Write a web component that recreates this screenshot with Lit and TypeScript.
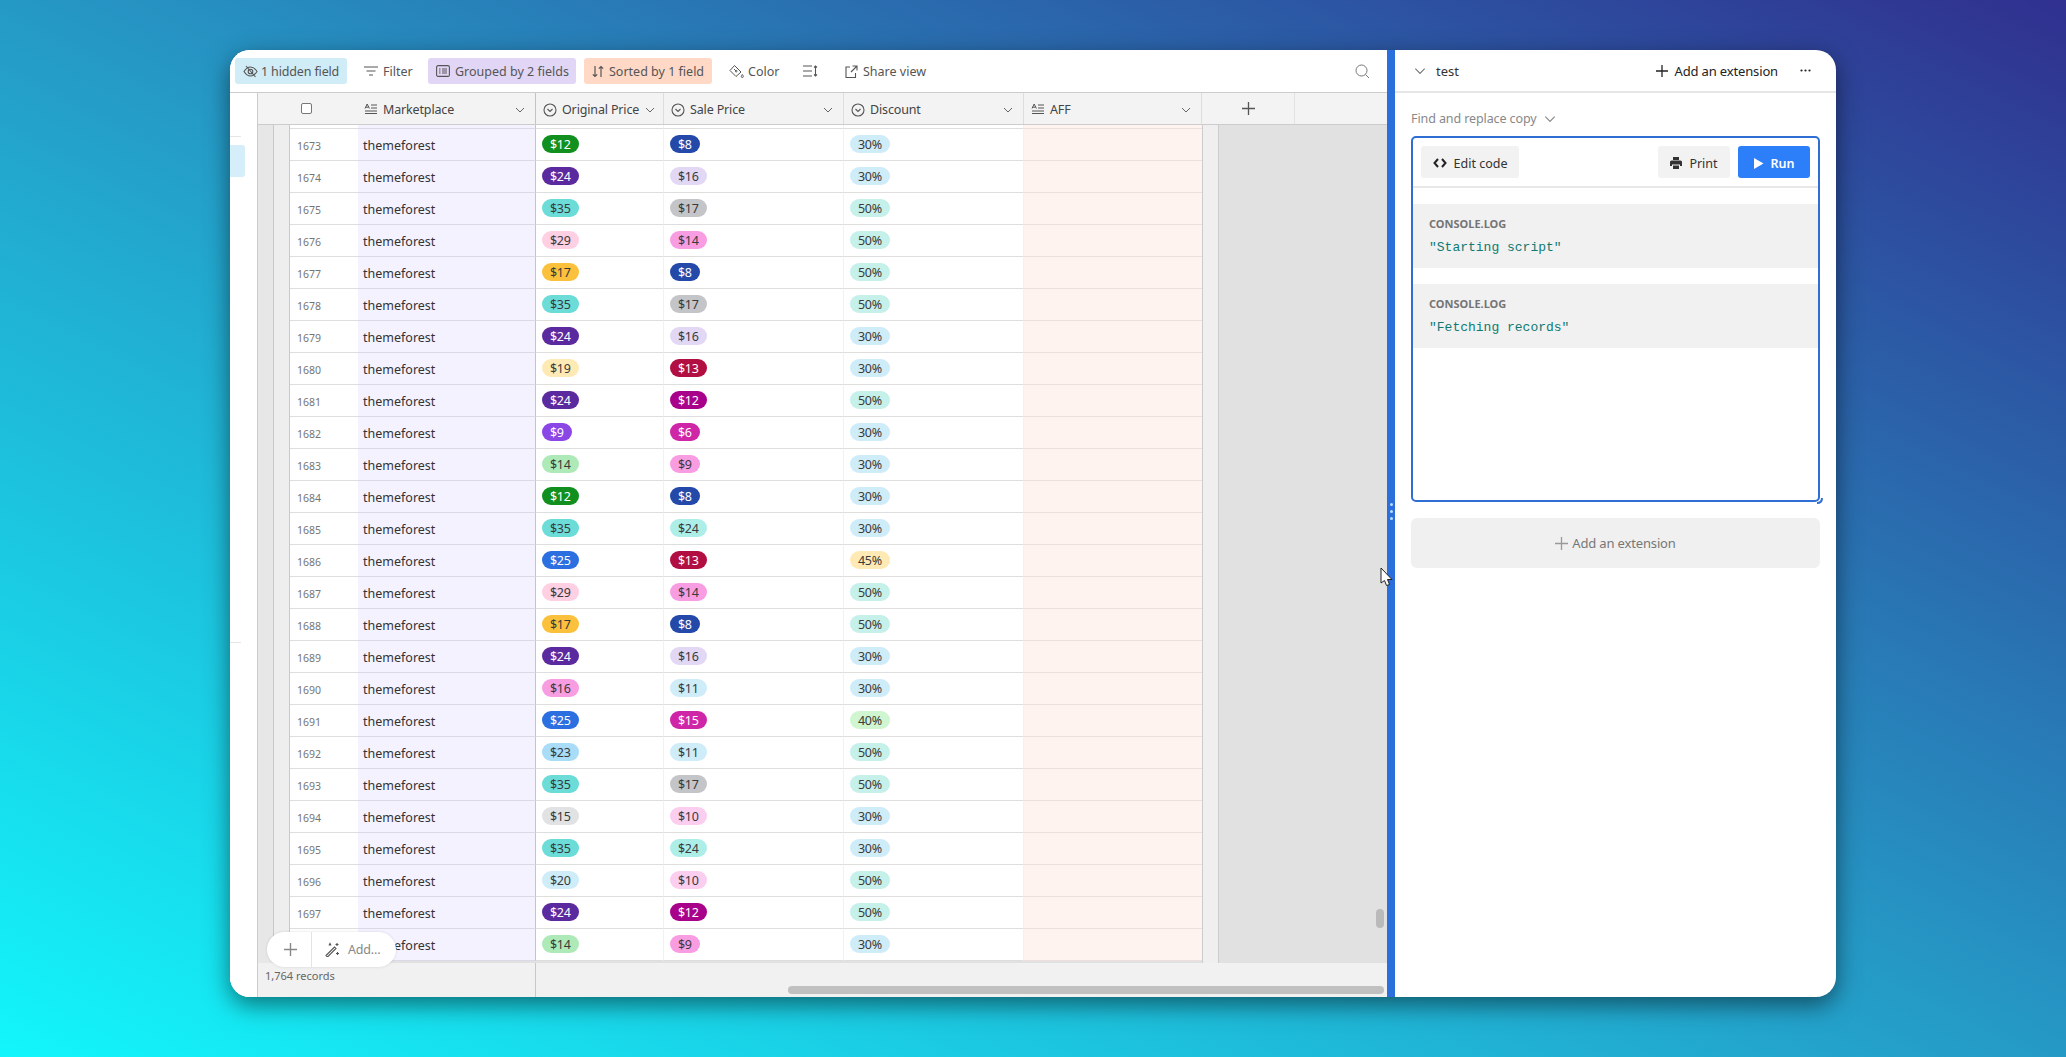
import { LitElement, html, css, svg } from "lit";
import { customElement } from "lit/decorators.js";

type Row = [number, string, string, string];
const R: Row[] = [
  [1673, "12 green", "8 navy", "30"],
  [1674, "24 purple", "16 lav", "30"],
  [1675, "35 teal", "17 gray", "50"],
  [1676, "29 pink", "14 fuch", "50"],
  [1677, "17 yellow", "8 navy", "50"],
  [1678, "35 teal", "17 gray", "50"],
  [1679, "24 purple", "16 lav", "30"],
  [1680, "19 lyellow", "13 crimson", "30"],
  [1681, "24 purple", "12 magenta", "50"],
  [1682, "9 violet", "6 mpink", "30"],
  [1683, "14 lgreen", "9 fuch", "30"],
  [1684, "12 green", "8 navy", "30"],
  [1685, "35 teal", "24 lteal", "30"],
  [1686, "25 blue", "13 crimson", "45"],
  [1687, "29 pink", "14 fuch", "50"],
  [1688, "17 yellow", "8 navy", "50"],
  [1689, "24 purple", "16 lav", "30"],
  [1690, "16 fuch", "11 lblue", "30"],
  [1691, "25 blue", "15 mpink", "40"],
  [1692, "23 sky", "11 lblue", "50"],
  [1693, "35 teal", "17 gray", "50"],
  [1694, "15 lgray", "10 lpink", "30"],
  [1695, "35 teal", "24 lteal", "30"],
  [1696, "20 lblue", "10 lpink", "50"],
  [1697, "24 purple", "12 magenta", "50"],
  [1698, "14 lgreen", "9 fuch", "30"],
];
const DISC: Record<string, string> = { "30": "lblue", "50": "mint", "45": "lyellow", "40": "mgreen" };

const chev = svg`<path d="M2 4l4 4 4-4" fill="none" stroke="currentColor" stroke-width="1"/>`;
const textIcon = svg`<path d="M1 5.5L3.200 1l2.200 4.500M1.800 4.200h2.800M7 2h6M7 5h6M1 8h12M1 10.500h12" fill="none" stroke="currentColor" stroke-width="1"/>`;
const selIcon = svg`<circle cx="7" cy="7" r="6" fill="none" stroke="currentColor" stroke-width="1.1"/><path d="M4.500 6l2.500 2.500L9.500 6" fill="none" stroke="currentColor" stroke-width="1.1"/>`;

@customElement("app-root")
export class AppRoot extends LitElement {
  static styles = css`
    :host {
      display: block;
      height: 100vh;
      box-sizing: border-box;
      padding: 50px 230px 60px;
      background: linear-gradient(to top right, #12f6fb 0%, #2599c6 50%, #30308f 100%);
      font-family: "Noto Sans", "Open Sans", sans-serif;
      font-size: 12.5px;
      color: #333;
      overflow: hidden;
    }
    svg { display: block; flex: none; }
    .window {
      height: 947px;
      display: flex;
      border-radius: 20px;
      overflow: hidden;
      background: #fff;
      box-shadow: 0 8px 24px rgba(0, 0, 0, 0.5);
    }
    .main {
      width: 1157px;
      flex: none;
      position: relative;
      display: flex;
      flex-direction: column;
      background: #e1e1e1;
    }
    .toolbar {
      height: 42px;
      flex: none;
      display: flex;
      align-items: center;
      background: #fff;
      border-bottom: 1px solid #ccc;
      padding-left: 5px;
      color: #555;
    }
    .tb {
      height: 26px;
      display: flex;
      align-items: center;
      gap: 5px;
      border-radius: 3px;
      padding: 0 8px;
      box-sizing: border-box;
      white-space: nowrap;
      flex: none;
    }
    .hidden-f { width: 112px; background: #cfecf7; margin-right: 9px; gap: 3px; letter-spacing: -0.15px; }
    .filter { width: 70px; margin-right: 2px; }
    .grouped { width: 148px; background: #e2d6f6; margin-right: 8px; }
    .sorted { width: 128px; background: #ffd9c6; margin-right: 8px; }
    .color { width: 69px; padding-left: 9px; gap: 4px; margin-right: 5px; }
    .rh { width: 30px; padding-left: 9px; margin-right: 4px; }
    .share { padding-left: 17px; gap: 5px; }
    .search { margin-left: auto; margin-right: 17px; color: #777; }
    .under { flex: 1; display: flex; min-height: 0; }
    .rail {
      width: 27px;
      flex: none;
      background: #fff;
      border-right: 1px solid #ccc;
    }
    .rail-line { width: 11px; height: 1px; background: #e6e6e6; margin-top: 43px; }
    .rail-sel { width: 15px; height: 32px; margin-top: 8px; background: #d6eefa; border-radius: 0 3px 3px 0; }
    .rail-line2 { margin-top: 465px; }
    .content { flex: 1; min-width: 0; display: flex; flex-direction: column; }
    .head {
      height: 32px;
      flex: none;
      box-sizing: border-box;
      display: flex;
      background: #f3f3f3;
      border-bottom: 1px solid #ccc;
      color: #444;
    }
    .hcheck { width: 32px; flex: none; }
    .hnum { width: 68px; flex: none; display: flex; align-items: center; padding-left: 11px; box-sizing: border-box; }
    .box { width: 11px; height: 11px; border: 1px solid #777; border-radius: 2px; background: #fff; margin-top: -1px; box-sizing: border-box; }
    .hc {
      box-sizing: border-box;
      display: flex;
      align-items: center;
      gap: 5px;
      padding: 2px 9px 0 7px;
      border-right: 1px solid #ddd;
      flex: none;
      white-space: nowrap;
      letter-spacing: -0.15px;
    }
    .hc .ch { margin-left: auto; color: #666; }
    .hc svg { color: #555; }
    .hc.w-m { padding-left: 6px; }
    .w-m { width: 178px; border-right-color: #c4c4c4; }
    .w-o { width: 128px; }
    .w-s { width: 180px; }
    .w-d { width: 180px; }
    .w-a { width: 178px; }
    .hadd { width: 93px; flex: none; box-sizing: border-box; border-right: 1px solid #e2e2e2; display: flex; align-items: center; justify-content: center; color: #555; }
    .body { flex: 1; min-height: 0; display: flex; overflow: hidden; }
    .g1 { width: 15px; flex: none; background: #e7e7e7; border-right: 1px solid #c8c8c8; }
    .g2 { width: 15px; flex: none; background: #eeeeee; border-right: 1px solid #c8c8c8; }
    .table { width: 912px; flex: none; }
    .g3 { width: 15px; flex: none; background: #efefef; border-left: 1px solid #ccc; border-right: 1px solid #ccc; }
    .row {
      display: flex;
      height: 32px;
      color: #333;
    }
    .row.top { height: 4px; }
    .row.top .c { padding-top: 0; }
    .c {
      box-sizing: border-box;
      flex: none;
      display: flex;
      align-items: center;
      background: #fff;
      border-bottom: 1px solid #dedede;
      padding-left: 6px;
      padding-top: 2px;
      border-right: 1px solid #f1f1f1;
    }
    .num { width: 68px; font-size: 10.5px; color: #757575; padding-left: 7px; border-right: none; }
    .c.w-m { background: #f5f2ff; padding-left: 5px; border-right-color: #c4c4c4; border-bottom-color: #dcd9e6; }
    .c.w-a { background: #fff3ef; border-right: none; border-bottom-color: #ecdfdc; }
    .pill {
      height: 18px;
      line-height: 19px;
      border-radius: 9px;
      padding: 0 8px;
      color: #3a3a3a;
      margin-top: -3px;
      letter-spacing: -0.3px;
    }
    .dark { color: #fff; }
    .green { background: #11901f; } .navy { background: #2449a8; } .purple { background: #5b2a9e; }
    .lav { background: #e2d8f5; } .teal { background: #6bdcd8; } .gray { background: #c4c5c8; }
    .pink { background: #ffcfe3; } .fuch { background: #f99de2; } .yellow { background: #fcc13c; }
    .lyellow { background: #ffeab6; } .crimson { background: #b10f41; } .magenta { background: #a8028b; }
    .violet { background: #8b46e6; } .mpink { background: #cf26a8; } .lgreen { background: #aeeab8; }
    .lteal { background: #aeeee8; } .blue { background: #2b6fe0; } .sky { background: #a8dcf7; }
    .lgray { background: #e1e2e4; } .lpink { background: #fbcdee; } .lblue { background: #cfecf9; }
    .mint { background: #c6f0ea; } .mgreen { background: #cff5d1; }
    .foot { height: 34px; flex: none; display: flex; background: #f1f1f1; }
    .foot-l {
      width: 278px;
      box-sizing: border-box;
      border-right: 1px solid #c8c8c8;
      padding: 4px 0 0 7px;
      font-size: 11px;
      line-height: 18px;
      color: #666;
    }
    .sbh { position: absolute; right: 3px; bottom: 3px; width: 596px; height: 8px; border-radius: 4px; background: #c0c0c0; }
    .sbv { position: absolute; right: 3px; top: 859px; width: 8px; height: 19px; border-radius: 4px; background: #bababa; }
    .fab {
      position: absolute;
      left: 37px;
      top: 882px;
      width: 129px;
      height: 35px;
      display: flex;
      align-items: center;
      background: #fff;
      border-radius: 18px;
      box-shadow: 0 0 3px rgba(0, 0, 0, 0.12);
      color: #888;
    }
    .fab-p { width: 45px; height: 100%; box-sizing: border-box; padding-left: 3px; border-right: 1px solid #e4e4e4; display: flex; align-items: center; justify-content: center; }
    .fab-a { display: flex; align-items: center; gap: 8px; padding-left: 13px; letter-spacing: -0.2px; }
    .cursor { position: absolute; left: 1150px; top: 517px; }
    .split { width: 8px; flex: none; background: #2b6fdc; display: flex; flex-direction: column; align-items: center; justify-content: center; gap: 4px; padding-bottom: 25px; box-sizing: border-box; }
    .split i { width: 3px; height: 3px; border-radius: 50%; background: #bfdcff; }
    .panel { flex: 1; min-width: 0; display: flex; flex-direction: column; }
    .p-head {
      height: 41px;
      flex: none;
      display: flex;
      align-items: center;
      border-bottom: 2px solid #e6e6e6;
      padding: 0 25px 0 18px;
      color: #333;
      font-size: 13px;
    }
    .p-chev { color: #777; }
    .p-head .t { margin-left: 9px; }
    .p-add { margin-left: auto; display: flex; align-items: center; gap: 7px; color: #222; margin-right: 22px; letter-spacing: -0.15px; }
    .p-body { padding: 0 16px; }
    .title { display: flex; align-items: center; gap: 6px; height: 43px; box-sizing: border-box; padding-top: 8px; color: #888; font-size: 12.5px; letter-spacing: -0.1px; }
    .title svg { color: #888; }
    .box-s {
      position: relative;
      height: 366px;
      box-sizing: border-box;
      border: 2px solid #2f6fd4;
      border-radius: 5px;
      background: #fff;
    }
    .bar {
      height: 50px;
      box-sizing: border-box;
      display: flex;
      align-items: center;
      gap: 8px;
      padding: 0 8px;
      border-bottom: 2px solid #e8e8e8;
    }
    .btn {
      height: 32px;
      box-sizing: border-box;
      border-radius: 3px;
      display: flex;
      align-items: center;
      justify-content: center;
      gap: 7px;
      padding-top: 2px;
      background: #f2f2f2;
      color: #333;
      font-size: 12.5px;
    }
    .b-edit { width: 98px; margin-right: auto; }
    .b-print { width: 72px; }
    .b-run { width: 72px; background: #2d7ff9; color: #fff; font-weight: 600; }
    .log {
      height: 64px;
      box-sizing: border-box;
      margin-top: 16px;
      background: #f1f1f1;
      padding: 11px 16px 0;
    }
    .log-t { font-size: 11px; font-weight: 700; color: #757575; line-height: 17px; }
    .log-c { font-family: "Liberation Mono", monospace; font-size: 13px; color: #0f7a73; line-height: 17px; margin-top: 7px; }
    .grip { position: absolute; right: -5px; bottom: -5px; }
    .add-ext {
      height: 50px;
      margin-top: 16px;
      border-radius: 6px;
      background: #f0f0f0;
      display: flex;
      align-items: center;
      justify-content: center;
      gap: 4px;
      color: #777;
      font-size: 13px;
      letter-spacing: -0.15px;
    }
  `;

  pill(spec: string) {
    const [v, c] = spec.split(" ");
    const dark = ["green", "navy", "purple", "crimson", "magenta", "violet", "mpink", "blue"].includes(c);
    return html`<span class="pill ${c} ${dark ? "dark" : ""}">$${v}</span>`;
  }

  render() {
    return html`
      <div class="window">
        <div class="main">
          <div class="toolbar">
            <div class="tb hidden-f">
              <svg width="15" height="13" viewBox="0 0 15 13" fill="none" stroke="currentColor" stroke-width="1.1"><path d="M1 6.500C3 3.300 5 2 7.500 2s4.500 1.300 6.500 4.500C12 9.700 10 11 7.500 11S3 9.700 1 6.500z"/><circle cx="7.500" cy="6.500" r="2.300"/><path d="M3 1l9.500 11"/></svg>
              <span>1 hidden field</span>
            </div>
            <div class="tb filter">
              <svg width="14" height="10" viewBox="0 0 14 10" fill="none" stroke="currentColor" stroke-width="1.2"><path d="M0 1h14M2.500 5h9M5 9h4"/></svg>
              <span>Filter</span>
            </div>
            <div class="tb grouped">
              <svg width="14" height="12" viewBox="0 0 14 12" fill="none" stroke="currentColor" stroke-width="1.1"><rect x=".6" y=".6" width="12.800" height="10.800" rx="1.500"/><path d="M3 4h1.500M6 4h5M3 6h1.500M6 6h5M3 8h1.500M6 8h5"/></svg>
              <span>Grouped by 2 fields</span>
            </div>
            <div class="tb sorted">
              <svg width="12" height="13" viewBox="0 0 12 13" fill="none" stroke="currentColor" stroke-width="1.2"><path d="M3 1v10.500M.8 9.300L3 11.500l2.200-2.200M9 12V1.500M6.800 3.700L9 1.500l2.200 2.200"/></svg>
              <span>Sorted by 1 field</span>
            </div>
            <div class="tb color">
              <svg width="15" height="15" viewBox="0 0 15 15" fill="none" stroke="currentColor" stroke-width="1"><path d="M5.500 1.500l6.500 6.500-5 4.500-6-6z"/><path d="M5 5l2 2"/><circle cx="7.200" cy="7.200" r=".8"/><path d="M13.300 10.500c.7 1 1 1.500 1 2a1 1 0 0 1-2 0c0-.5.300-1 1-2z"/></svg>
              <span>Color</span>
            </div>
            <div class="tb rh">
              <svg width="15" height="12" viewBox="0 0 15 12" fill="none" stroke="currentColor" stroke-width="1.1"><path d="M0 1h9M0 6h9M0 11h9M12.500 1v10M11 2.500L12.500 1 14 2.500M11 9.500l1.500 1.500L14 9.500"/></svg>
            </div>
            <div class="tb share">
              <svg width="13" height="13" viewBox="0 0 13 13" fill="none" stroke="currentColor" stroke-width="1.1"><path d="M5 2H1v10.500h9.500V8M7.500 1h4.500v4.500M12 1L6 7"/></svg>
              <span>Share view</span>
            </div>
            <div class="search">
              <svg width="15" height="15" viewBox="0 0 15 15" fill="none" stroke="currentColor" stroke-width="1"><circle cx="6.500" cy="6.500" r="5.500"/><path d="M10.500 10.500l3.500 3.500"/></svg>
            </div>
          </div>
          <div class="under">
            <div class="rail">
              <div class="rail-line"></div>
              <div class="rail-sel"></div>
              <div class="rail-line rail-line2"></div>
            </div>
            <div class="content">
              <div class="head">
                <div class="hcheck"></div>
                <div class="hnum"><div class="box"></div></div>
                ${this.hcell("w-m", textIcon, "Marketplace")}
                ${this.hcell("w-o", selIcon, "Original Price")}
                ${this.hcell("w-s", selIcon, "Sale Price")}
                ${this.hcell("w-d", selIcon, "Discount")}
                ${this.hcell("w-a", textIcon, "AFF")}
                <div class="hadd"><svg width="13" height="13" viewBox="0 0 13 13" fill="none" stroke="currentColor" stroke-width="1.300"><path d="M6.500 0v13M0 6.500h13"/></svg></div>
              </div>
              <div class="body">
                <div class="g1"></div>
                <div class="g2"></div>
                <div class="table">
                  <div class="row top">
                    <div class="c num"></div><div class="c w-m"></div><div class="c w-o"></div><div class="c w-s"></div><div class="c w-d"></div><div class="c w-a"></div>
                  </div>
                  ${R.map(
                    (r) => html`<div class="row">
                      <div class="c num">${r[0]}</div>
                      <div class="c w-m">themeforest</div>
                      <div class="c w-o">${this.pill(r[1])}</div>
                      <div class="c w-s">${this.pill(r[2])}</div>
                      <div class="c w-d"><span class="pill ${DISC[r[3]]}">${r[3]}%</span></div>
                      <div class="c w-a"></div>
                    </div>`
                  )}
                </div>
                <div class="g3"></div>
              </div>
              <div class="foot"><div class="foot-l">1,764 records</div></div>
            </div>
          </div>
          <div class="sbh"></div>
          <div class="sbv"></div>
          <div class="fab">
            <div class="fab-p"><svg width="13" height="13" viewBox="0 0 13 13" fill="none" stroke="#888" stroke-width="1.400"><path d="M6.500 0v13M0 6.500h13"/></svg></div>
            <div class="fab-a">
              <svg width="15" height="15" viewBox="0 0 15 15" fill="none" stroke="#555" stroke-width="1.100"><path d="M1 13.500L9.500 5l1.500 1.500L2.500 15zM4 3.500l1-2 1 2M12 1v3M10.500 2.500h3M12.500 10v3M11 11.500h3"/></svg>
              <span>Add…</span>
            </div>
          </div>
          <svg class="cursor" width="13" height="20" viewBox="0 0 13 20"><path d="M1 1v15l3.500-2.500 2 5 3-1-2-5H12z" fill="#fff" stroke="#222" stroke-width="1"/></svg>
        </div>
        <div class="split"><i></i><i></i><i></i></div>
        <div class="panel">
          <div class="p-head">
            <svg class="p-chev" width="14" height="14" viewBox="0 0 12 12">${chev}</svg>
            <span class="t">test</span>
            <div class="p-add">
              <svg width="12" height="12" viewBox="0 0 12 12" fill="none" stroke="#222" stroke-width="1.300"><path d="M6 0v12M0 6h12"/></svg>
              <span>Add an extension</span>
            </div>
            <svg width="11" height="3" viewBox="0 0 11 3" fill="#222"><circle cx="1.500" cy="1.500" r="1.100"/><circle cx="5.500" cy="1.500" r="1.100"/><circle cx="9.500" cy="1.500" r="1.100"/></svg>
          </div>
          <div class="p-body">
            <div class="title">
              <span>Find and replace copy</span>
              <svg width="14" height="14" viewBox="0 0 12 12">${chev}</svg>
            </div>
            <div class="box-s">
              <div class="bar">
                <div class="btn b-edit">
                  <svg width="14" height="10" viewBox="0 0 14 10" fill="none" stroke="#222" stroke-width="2"><path d="M5 1L1.500 5 5 9M9 1l3.500 4L9 9"/></svg>
                  <span>Edit code</span>
                </div>
                <div class="btn b-print">
                  <svg width="12" height="12" viewBox="0 0 12 12" fill="#333"><path d="M3 0h6v3H3zM1.500 3.500h9A1.500 1.500 0 0 1 12 5v4h-2V7.500H2V9H0V5a1.500 1.500 0 0 1 1.500-1.500zM3 8.500h6V12H3z"/></svg>
                  <span>Print</span>
                </div>
                <div class="btn b-run">
                  <svg width="10" height="11" viewBox="0 0 10 11" fill="#fff"><path d="M0 0l9.500 5.500L0 11z"/></svg>
                  <span>Run</span>
                </div>
              </div>
              <div class="log">
                <div class="log-t">CONSOLE.LOG</div>
                <div class="log-c">"Starting script"</div>
              </div>
              <div class="log">
                <div class="log-t">CONSOLE.LOG</div>
                <div class="log-c">"Fetching records"</div>
              </div>
              <svg class="grip" width="8" height="8" viewBox="0 0 8 8" fill="none" stroke="#2f6fd4" stroke-width="2"><path d="M7 1c0 3-2 5-5 5"/></svg>
            </div>
            <div class="add-ext">
              <svg width="13" height="13" viewBox="0 0 13 13" fill="none" stroke="#999" stroke-width="1.300"><path d="M6.500 0v13M0 6.500h13"/></svg>
              <span>Add an extension</span>
            </div>
          </div>
        </div>
      </div>
    `;
  }

  hcell(w: string, icon: unknown, label: string) {
    return html`<div class="hc ${w}">
      <svg width="14" height="14" viewBox="0 0 14 14">${icon}</svg>
      <span>${label}</span>
      <svg class="ch" width="12" height="12" viewBox="0 0 12 12">${chev}</svg>
    </div>`;
  }
}
